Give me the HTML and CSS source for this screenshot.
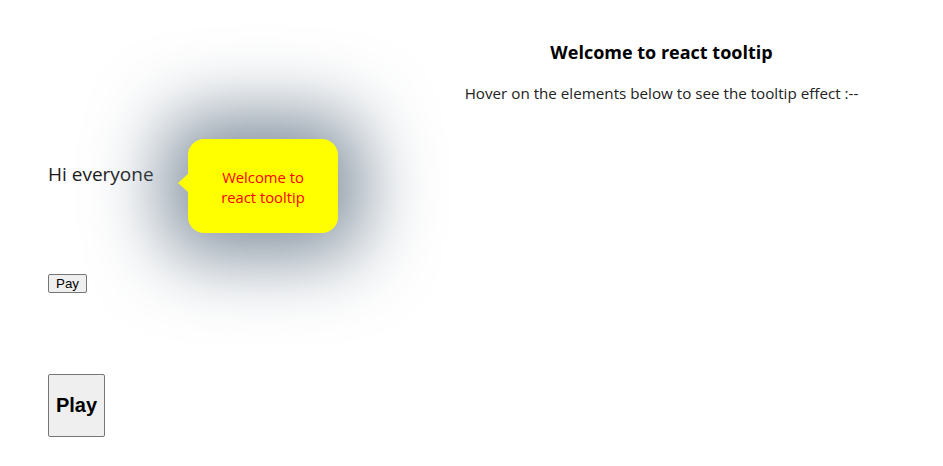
FILE: index.html
```html
<!DOCTYPE html>
<html>
<head>
<meta charset="utf-8">
<link rel="stylesheet" href="styles.css">
</head>
<body>
<div class="page">
  <div class="left">
    <div class="hi-row">
      <span class="hi">Hi everyone</span>
      <div class="tooltip">Welcome to<br>react tooltip</div>
    </div>
    <div class="pay-row"><button class="pay">Pay</button></div>
    <div class="play-row"><button class="play">Play</button></div>
  </div>
  <div class="right">
    <h3 class="title">Welcome to react tooltip</h3>
    <p class="desc">Hover on the elements below to see the tooltip effect :--</p>
  </div>
</div>
</body>
</html>
```

FILE: styles.css
```css
html, body {
  margin: 0;
  padding: 0;
  background: #fff;
}
body {
  margin: 8px;
  font-family: "Open Sans", "Noto Sans", sans-serif;
  color: #000;
}
.page {
  display: grid;
  grid-template-columns: 380px 1fr;
}
.left {
  padding-left: 40px;
  padding-top: 152px;
  display: flex;
  flex-direction: column;
}
.hi-row {
  position: relative;
  height: 28px;
}
.hi {
  font-size: 19px;
  color: #1a1a1a;
  line-height: 28px;
}
.tooltip {
  position: absolute;
  left: 140px;
  top: -21px;
  width: 150px;
  height: 94px;
  box-sizing: border-box;
  background: #ffff00;
  color: #ff0000;
  border-radius: 16px;
  font-size: 14.8px;
  line-height: 20px;
  padding-top: 1px;
  display: flex;
  align-items: center;
  justify-content: center;
  text-align: center;
  box-shadow: 0 0 72px 26px rgba(112, 128, 144, 0.85);
}
.tooltip::before {
  content: "";
  position: absolute;
  left: -10px;
  top: 35px;
  border-style: solid;
  border-width: 9px 10px 9px 0;
  border-color: transparent #ffff00 transparent transparent;
}
.pay-row {
  margin-top: 83px;
}
.pay {
  font-family: "Liberation Sans", Arial, sans-serif;
  font-size: 13.33px;
  padding: 1px 7px;
  border: 1px solid #767676;
  border-radius: 2px;
  background: #efefef;
  color: #000;
}
.play-row {
  margin-top: 81px;
}
.play {
  font-family: "Liberation Sans", Arial, sans-serif;
  font-weight: bold;
  font-size: 20px;
  width: 57px;
  height: 63px;
  border: 1px solid #767676;
  border-radius: 2px;
  background: #efefef;
  color: #000;
  padding: 0;
}
.right {
  text-align: center;
  padding-top: 32px;
}
.title {
  margin: 0;
  font-size: 18px;
  font-weight: bold;
  line-height: 24px;
}
.desc {
  margin: 18px 0 0;
  font-size: 15.2px;
  line-height: 22px;
  color: #222;
}
```
